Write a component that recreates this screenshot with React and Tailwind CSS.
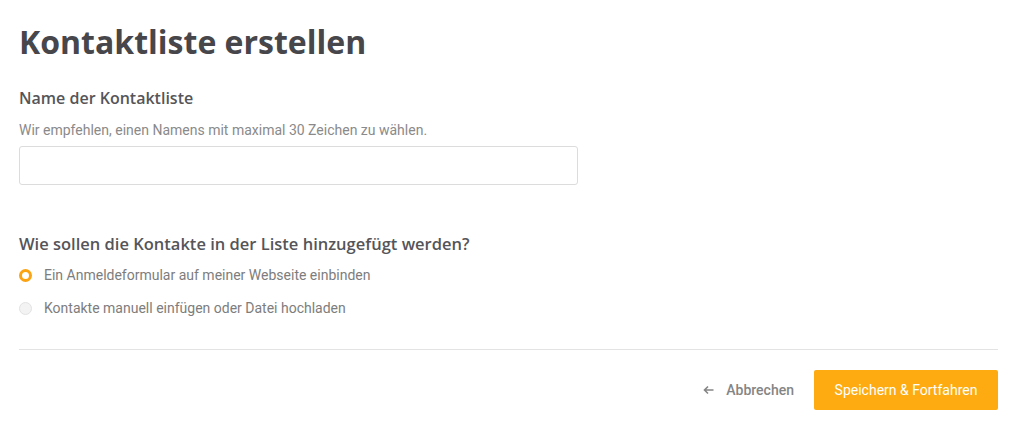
import React, { useState } from 'react';

const options = [
    { id: 'form', label: 'Ein Anmeldeformular auf meiner Webseite einbinden' },
    { id: 'manual', label: 'Kontakte manuell einfügen oder Datei hochladen' },
];

const App = () => {
    const [name, setName] = useState('');
    const [mode, setMode] = useState('form');

    return (
        <div className="min-h-[446px] bg-white px-[19px] pt-[22px] font-['Roboto',sans-serif]">
            <h1 className="font-['Open_Sans',sans-serif] text-[32px] font-bold leading-[40px] text-[#46464b]">
                Kontaktliste erstellen
            </h1>

            {/* Name */}
            <div className="mt-[25px]">
                <h2 className="font-['Open_Sans',sans-serif] text-[16px] font-semibold leading-[22px] text-[#555559]">
                    Name der Kontaktliste
                </h2>
                <p className="mt-[12px] text-[14px] leading-[18px] text-[#8a8a8a]">
                    Wir empfehlen, einen Namens mit maximal 30 Zeichen zu wählen.
                </p>
                <input
                    type="text"
                    value={name}
                    onChange={(e) => setName(e.target.value)}
                    className="mt-[7px] block h-[39px] w-[559px] rounded-[3px] border border-[#dcdcdc] px-3 text-sm text-[#4a4a4f] outline-none"
                />
            </div>

            {/* Mode */}
            <div className="mt-[47px]">
                <h2 className="font-['Open_Sans',sans-serif] text-[16.5px] font-semibold leading-[23px] text-[#555559]">
                    Wie sollen die Kontakte in der Liste hinzugefügt werden?
                </h2>
                <div className="mt-[10px] flex flex-col gap-[13px]">
                    {options.map((opt) => (
                        <label key={opt.id} className="flex cursor-pointer items-center gap-[12px]" onClick={() => setMode(opt.id)}>
                            <span
                                className={`box-border h-[13px] w-[13px] rounded-full ${mode === opt.id ? 'border-[3.5px] border-[#fca311] bg-white' : 'border border-[#e2e2e2] bg-[#f3f3f3]'}`}
                            />
                            <span className="text-[14px] leading-[20px] text-[#7d7d7d]">{opt.label}</span>
                        </label>
                    ))}
                </div>
            </div>

            <div className="mt-[31px] h-px w-[979px] bg-[#e3e3e3]" />

            <div className="mt-[20px] flex w-[979px] items-center justify-end">
                <button className="flex items-center gap-[12px] text-[14px] font-medium text-[#858585]">
                    <svg width="11" height="10" viewBox="0 0 11 10" fill="none" stroke="currentColor" strokeWidth="1.6">
                        <path d="M10.5 5H1.5M5 1.5L1.5 5L5 8.5" />
                    </svg>
                    Abbrechen
                </button>
                <button className="ml-[20px] h-[40px] w-[184px] rounded-[2px] bg-[#fdab10] text-[14px] text-white">
                    Speichern &amp; Fortfahren
                </button>
            </div>
        </div>
    );
};

export default App;
